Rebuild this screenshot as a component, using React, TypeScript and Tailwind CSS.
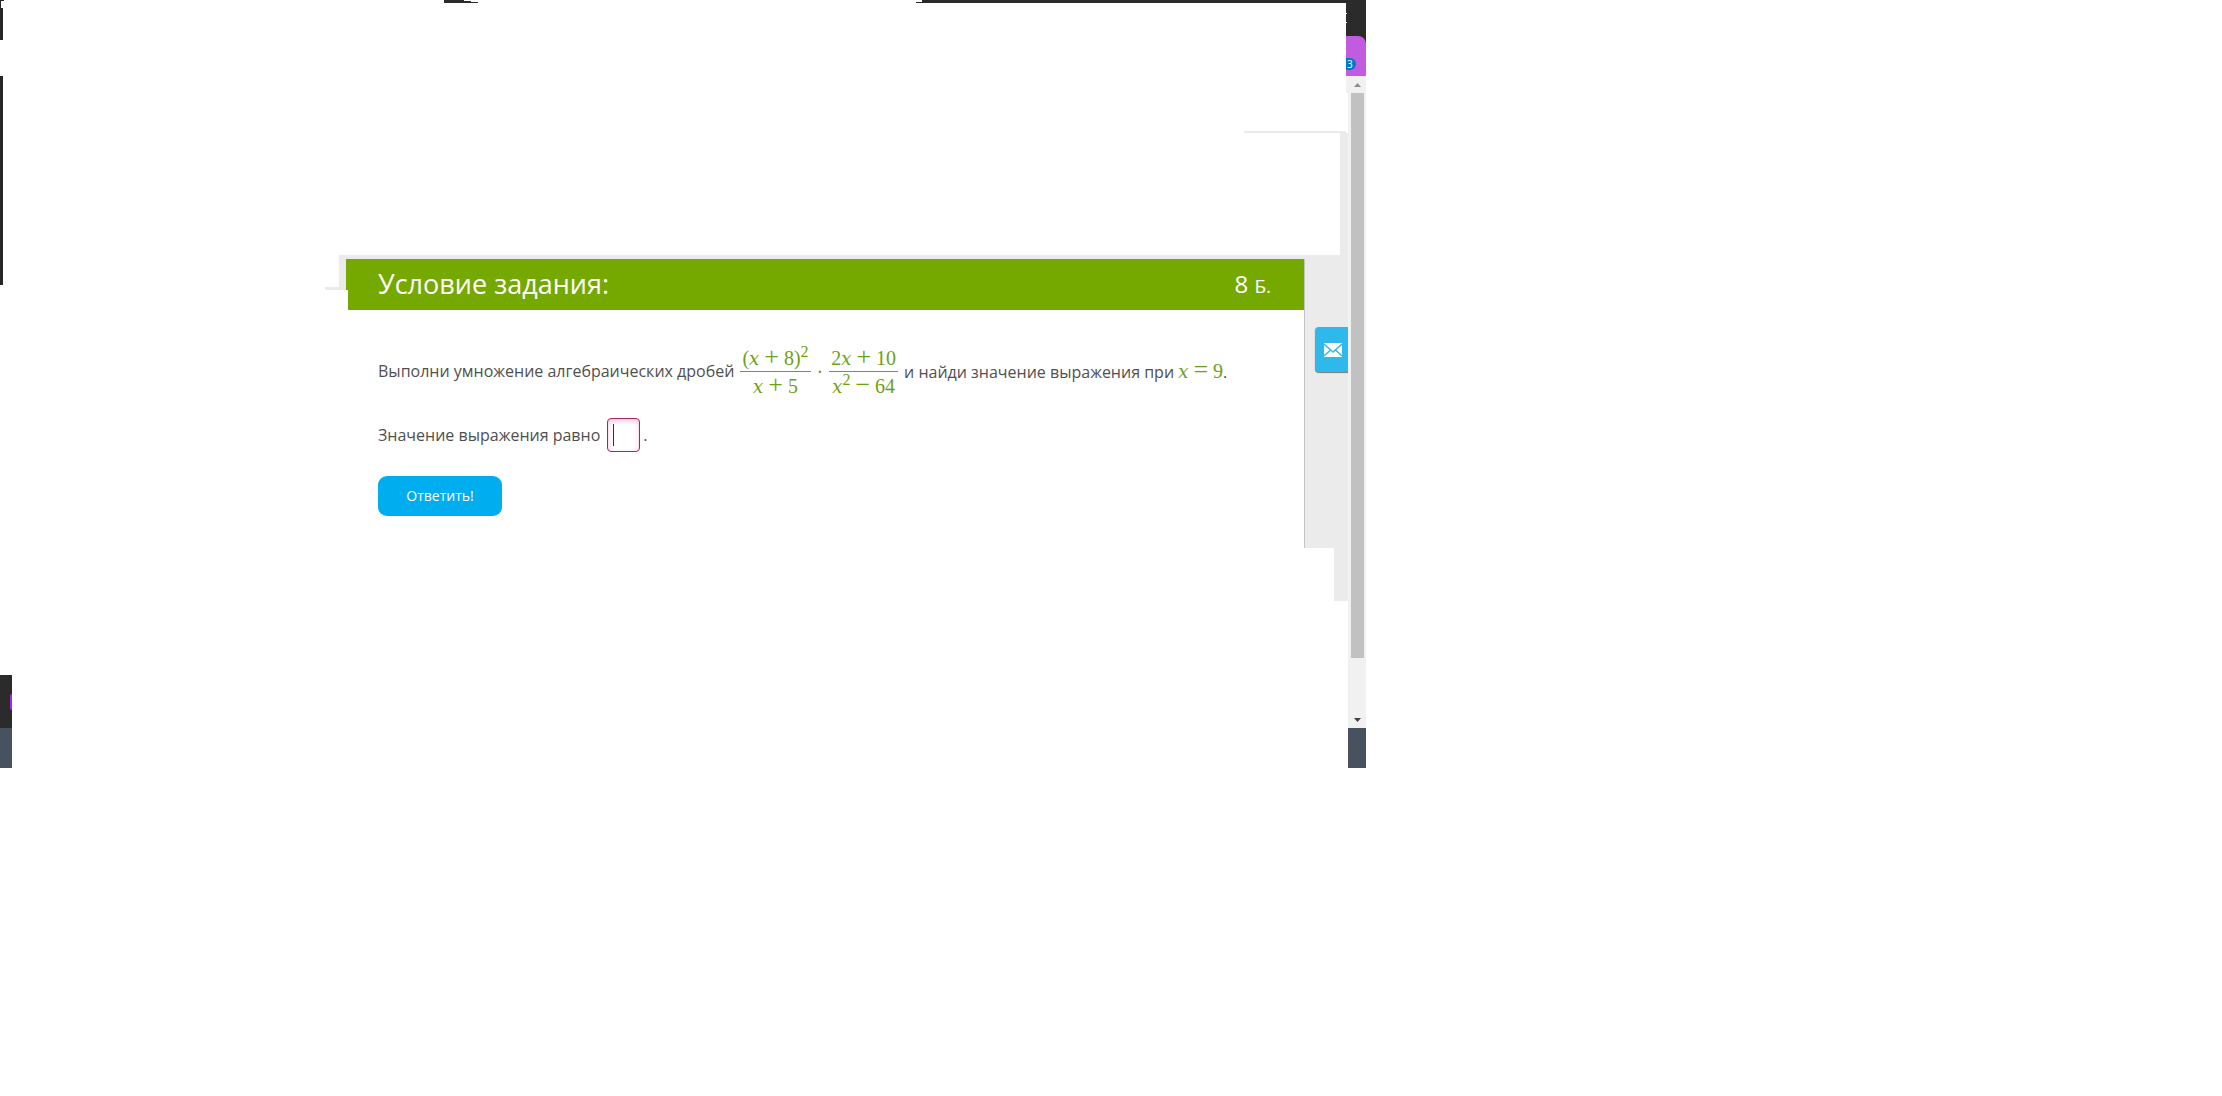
import { ReactNode } from "react";

function LeftEdge() {
  return (
    <div className="flex w-3 shrink-0 flex-col">
      <div className="flex h-10 flex-col">
        <div className="h-px w-1 bg-[#262626]" />
        <div className="h-[7px] w-px bg-[#262626]" />
        <div className="w-[3px] grow bg-[#262626]" />
      </div>
      <div className="mt-9 h-[209px] w-[3px] bg-[#262626]" />
      <div className="mt-auto flex h-[53px] items-center justify-end overflow-hidden bg-[#2b2b2b]">
        <div className="h-4 w-[2px] rounded-l-full bg-[#9a2bf0]" />
      </div>
      <div className="h-10 bg-[#46525e]" />
    </div>
  );
}

function TopStrip() {
  return (
    <div className="flex h-[3px] justify-between">
      <div className="ml-8 flex grow items-start pl-[400px]">
        <div className="h-[3px] w-5 bg-[#2b2b2b]" />
        <div className="h-[3px] w-[7px] border-t border-white bg-[#2b2b2b]" />
        <div className="h-[3px] w-[7px] border-t-2 border-white bg-[#2b2b2b]" />
      </div>
      <div className="flex w-[432px] items-end">
        <div className="h-px w-[6px] bg-[#2b2b2b]" />
        <div className="h-[3px] grow bg-[#2b2b2b]" />
      </div>
    </div>
  );
}

function Scrollbar() {
  return (
    <div className="flex grow flex-col bg-[#f1f1f1]">
      <div className="-ml-[2px] flex h-[17px] items-center justify-center bg-[#f1f1f1] pl-[3px]">
        <svg className="h-1 w-[7px]" viewBox="0 0 7 4" fill="#8c8c8c">
          <path d="M3.5 0 7 4H0z" />
        </svg>
      </div>
      <div className="ml-[3px] h-[565px] w-[13px] bg-[#c1c1c1]" />
      <div className="mt-auto flex h-[17px] items-center justify-center">
        <svg className="h-1 w-[7px]" viewBox="0 0 7 4" fill="#404040">
          <path d="M0 0h7L3.5 4z" />
        </svg>
      </div>
    </div>
  );
}

function RightEdge() {
  return (
    <div className="flex w-[18px] shrink-0 flex-col">
      <div className="-ml-[2px] bg-[#2b2b2b]">
        <div className="flex h-9 flex-col gap-2 pt-[13px]">
          <span className="size-px bg-white" />
          <span className="size-px bg-white" />
        </div>
        <div className="flex h-10 items-end overflow-hidden rounded-tr-lg bg-[#c15be0] pb-[6px]">
          <span className="flex h-3 w-[10px] items-center justify-start rounded-r-full bg-[#0078c8] pl-px font-['Open_Sans',sans-serif] text-[10px] text-white">
            3
          </span>
        </div>
      </div>
      <Scrollbar />
      <div className="h-10 bg-[#46525e]" />
    </div>
  );
}

function MathText({ children }: { children: ReactNode }) {
  return (
    <span className="font-['Liberation_Serif',serif] text-[20px] leading-5 whitespace-nowrap text-[#6d9f17]">
      {children}
    </span>
  );
}

function X() {
  return <i className="font-['DejaVu_Serif',serif] text-[18px] leading-none">x</i>;
}

function Op({ children }: { children: ReactNode }) {
  return <span className="mx-[5px] text-[26px] leading-none">{children}</span>;
}

function Power({ children }: { children: ReactNode }) {
  return <span className="relative -top-2 text-[16px] leading-none">{children}</span>;
}

function Fraction({ top, bottom }: { top: ReactNode; bottom: ReactNode }) {
  return (
    <span className="flex flex-col items-center">
      <span className="flex h-7 items-end px-[2px] pb-px">{top}</span>
      <span className="h-px w-full bg-[#6d9f17]" />
      <span className="flex h-7 items-start px-[2px]">{bottom}</span>
    </span>
  );
}

function TaskCard() {
  return (
    <main className="min-w-0 grow border-r border-[#c4c4c4] text-[16px] text-[#505050]">
      <header className="flex">
        <div className="h-[31px] w-[2px] bg-[#76a900]" />
        <div className="flex h-[51px] grow items-center justify-between bg-[#76a900] pr-[33px] pb-px pl-[30px] text-white">
          <h1 className="text-[27px]">Условие задания:</h1>
          <p className="text-[24px]">
            8 <span className="text-[19px]">Б.</span>
          </p>
        </div>
      </header>
      <form className="flex flex-col items-start px-8" onSubmit={(e) => e.preventDefault()}>
        <div className="mt-[33px] flex h-[57px] items-center gap-[6px] whitespace-nowrap">
          <span className="pb-[2px]">Выполни умножение алгебраических дробей</span>
          <MathText>
            <span className="flex items-center gap-[6px]">
              <Fraction
                top={
                  <span>
                    (<X />
                    <Op>+</Op>8)<Power>2</Power>
                  </span>
                }
                bottom={
                  <span>
                    <X />
                    <Op>+</Op>5
                  </span>
                }
              />
              <span>·</span>
              <Fraction
                top={
                  <span>
                    2<X />
                    <Op>+</Op>10
                  </span>
                }
                bottom={
                  <span>
                    <X />
                    <Power>2</Power>
                    <Op>−</Op>64
                  </span>
                }
              />
            </span>
          </MathText>
          <span className="pb-[2px]">
            и найди значение выражения при{" "}
            <MathText>
              <X />
              <Op>=</Op>9
            </MathText>
            .
          </span>
        </div>
        <div className="mt-[18px] flex items-center">
          <label htmlFor="answer">Значение выражения равно</label>
          <span className="relative ml-[7px] flex">
            <input
              id="answer"
              type="text"
              className="h-[34px] w-[33px] rounded border border-[#a82463] px-1 caret-transparent shadow-[inset_0_2px_5px_#f3bfe0] outline-none"
            />
            <span className="absolute top-[6px] left-[6px] h-[22px] w-px bg-[#333333]" />
          </span>
          <span className="ml-[3px]">.</span>
        </div>
        <button
          type="submit"
          className="mt-6 h-10 w-[124px] rounded-[9px] bg-[#00adef] pb-[2px] text-[14px] text-white"
        >
          Ответить!
        </button>
      </form>
    </main>
  );
}

function SidePanel() {
  return (
    <aside className="flex w-[43px] shrink-0 flex-col items-end bg-[#ebebeb]">
      <button
        type="button"
        aria-label="Написать сообщение"
        className="mt-[68px] flex h-[45px] w-[33px] items-center justify-center rounded-l bg-[#2eb8ec] pl-[3px] shadow-[0_1px_1px_#777777]"
      >
        <svg className="h-[14px] w-[18px]" viewBox="0 0 18 14" fill="none">
          <path d="M0 0h18v14H0z" fill="#ffffff" />
          <path d="M0 1l9 8 9-8M0 13l6.500-6M18 13l-6.500-6" stroke="#2eb8ec" strokeWidth="1.400" />
        </svg>
      </button>
    </aside>
  );
}

export default function App() {
  return (
    <div className="min-h-screen bg-white font-['Open_Sans',sans-serif]">
      <div className="flex w-full max-w-[1366px]">
        <LeftEdge />
        <div className="flex min-w-0 grow flex-col">
          <TopStrip />
          <div className="mt-32 mr-[2px] h-[2px] w-[102px] self-end bg-[#ebebeb]" />
          <div className="h-[122px] w-2 self-end bg-[#ebebeb]" />
          <div className="ml-[327px] h-1 bg-[#ebebeb]" />
          <div className="ml-[313px] flex h-[289px]">
            <div className="flex w-[21px] shrink-0 flex-col items-end">
              <div className="h-7 w-[7px] bg-[#ebebeb]" />
              <div className="h-[3px] w-full bg-[#ebebeb]" />
            </div>
            <TaskCard />
            <SidePanel />
          </div>
          <div className="mb-[167px] h-[53px] w-[14px] self-end bg-[#ebebeb]" />
        </div>
        <RightEdge />
      </div>
    </div>
  );
}
